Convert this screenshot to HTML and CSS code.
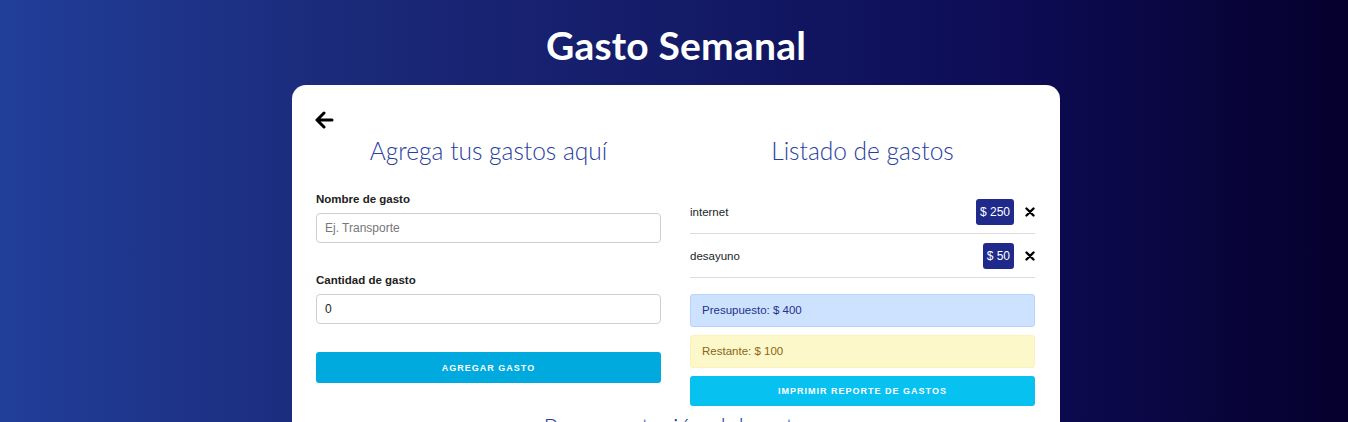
FILE: index.html
```html
<!DOCTYPE html>
<html lang="es">
<head>
<meta charset="utf-8">
<title>Gasto Semanal</title>
<link rel="stylesheet" href="styles.css">
</head>
<body>
<header class="top">
  <h1 class="title">Gasto Semanal</h1>
</header>
<main class="card">
  <div class="back-row">
    <svg class="back" width="20" height="18" viewBox="0 0 20 18"><path d="M18 9H3M10 2L3 9l7 7" fill="none" stroke="#000" stroke-width="3" stroke-linecap="round" stroke-linejoin="round"/></svg>
  </div>
  <div class="cols">
    <section class="col">
      <h2 class="heading">Agrega tus gastos aquí</h2>
      <form class="form">
        <label class="label" for="nombre">Nombre de gasto</label>
        <input class="input" id="nombre" type="text" placeholder="Ej. Transporte">
        <label class="label label-2" for="cantidad">Cantidad de gasto</label>
        <input class="input" id="cantidad" type="text" value="0">
        <button class="btn btn-add" type="button">AGREGAR GASTO</button>
      </form>
    </section>
    <section class="col">
      <h2 class="heading">Listado de gastos</h2>
      <ul class="list">
        <li class="item">
          <span class="item-name">internet</span>
          <span class="badge">$ 250</span>
          <svg class="del" width="10" height="10" viewBox="0 0 10 10"><path d="M1.5 1.5l7 7M8.5 1.5l-7 7" stroke="#000" stroke-width="2.4" stroke-linecap="round"/></svg>
        </li>
        <li class="item">
          <span class="item-name">desayuno</span>
          <span class="badge">$ 50</span>
          <svg class="del" width="10" height="10" viewBox="0 0 10 10"><path d="M1.5 1.5l7 7M8.5 1.5l-7 7" stroke="#000" stroke-width="2.4" stroke-linecap="round"/></svg>
        </li>
      </ul>
      <div class="alert alert-info">Presupuesto: $ 400</div>
      <div class="alert alert-warn">Restante: $ 100</div>
      <button class="btn btn-print" type="button">IMPRIMIR REPORTE DE GASTOS</button>
    </section>
  </div>
  <h2 class="heading heading-chart">Representación del gasto</h2>
</main>
</body>
</html>
```

FILE: styles.css
```css
* { box-sizing: border-box; }
html, body { margin: 0; height: 422px; overflow: hidden; }
body {
  background: linear-gradient(to right, #213e99 0%, #1b2a7a 25%, #0d0c55 75%, #05002c 100%);
  font-family: "Liberation Sans", Arial, sans-serif;
  color: #212529;
  padding-left: 4px;
}
.top { padding-top: 19px; text-align: center; }
.title {
  margin: 0;
  font-family: Lato, "Open Sans", sans-serif;
  font-weight: 700;
  font-size: 39px;
  line-height: 52px;
  color: #fff;
  letter-spacing: 0.2px;
}
.card {
  width: 768px;
  margin: 14px auto 0;
  background: #fff;
  border-radius: 14px;
  padding: 24px 25px 40px 24px;
}
.back-row { height: 22px; }
.back { display: block; margin: 2px 0 0 -2px; }
.cols { display: flex; gap: 29px; }
.col { flex: 1 1 0; min-width: 0; }
.heading {
  margin: 2px 0 0;
  text-align: center;
  font-family: Lato, "Open Sans", sans-serif;
  font-weight: 300;
  font-size: 24.5px;
  line-height: 32px;
  color: #2a3ea0;
}
.form { display: flex; flex-direction: column; padding-top: 24px; }
.label {
  font-weight: 700;
  font-size: 11.5px;
  line-height: 16px;
  color: #222;
  margin-bottom: 6px;
}
.label-2 { margin-top: 29px; }
.input {
  height: 30px;
  border: 1px solid #cfcfcf;
  border-radius: 4px;
  padding: 0 8px;
  font-family: "Liberation Sans", Arial, sans-serif;
  font-size: 12px;
  color: #222;
}
.input::placeholder { color: #777; }
.btn {
  display: block;
  width: 100%;
  border: 0;
  border-radius: 3px;
  color: #fff;
  font-family: "Liberation Sans", Arial, sans-serif;
  font-weight: 700;
  font-size: 9px;
  letter-spacing: 1px;
  height: 31px;
}
.btn-add { background: #00aade; margin-top: 28px; }
.list { list-style: none; margin: 23px 0 0; padding: 0; }
.item {
  display: flex;
  align-items: center;
  height: 44px;
  border-bottom: 1px solid #dcdcdc;
  font-size: 11.5px;
}
.item-name { flex: 1; }
.badge {
  background: #1f2a8a;
  color: #fff;
  font-size: 12px;
  border-radius: 3px;
  padding: 0 4px;
  line-height: 26px;
  height: 26px;
}
.del { margin: 0 0 0 11px; }
.alert {
  height: 33px;
  border-radius: 3px;
  font-size: 11.5px;
  line-height: 31px;
  padding: 0 11px;
  border: 1px solid;
}
.alert-info { margin-top: 16px; background: #cde2fe; border-color: #b5d3fd; color: #25318c; }
.alert-warn { margin-top: 8px; background: #fcf8c9; border-color: #fbf2b7; color: #8a6616; }
.btn-print { background: #07c1f1; margin-top: 8px; height: 30px; }
.heading-chart { margin-top: 6px; }
```
